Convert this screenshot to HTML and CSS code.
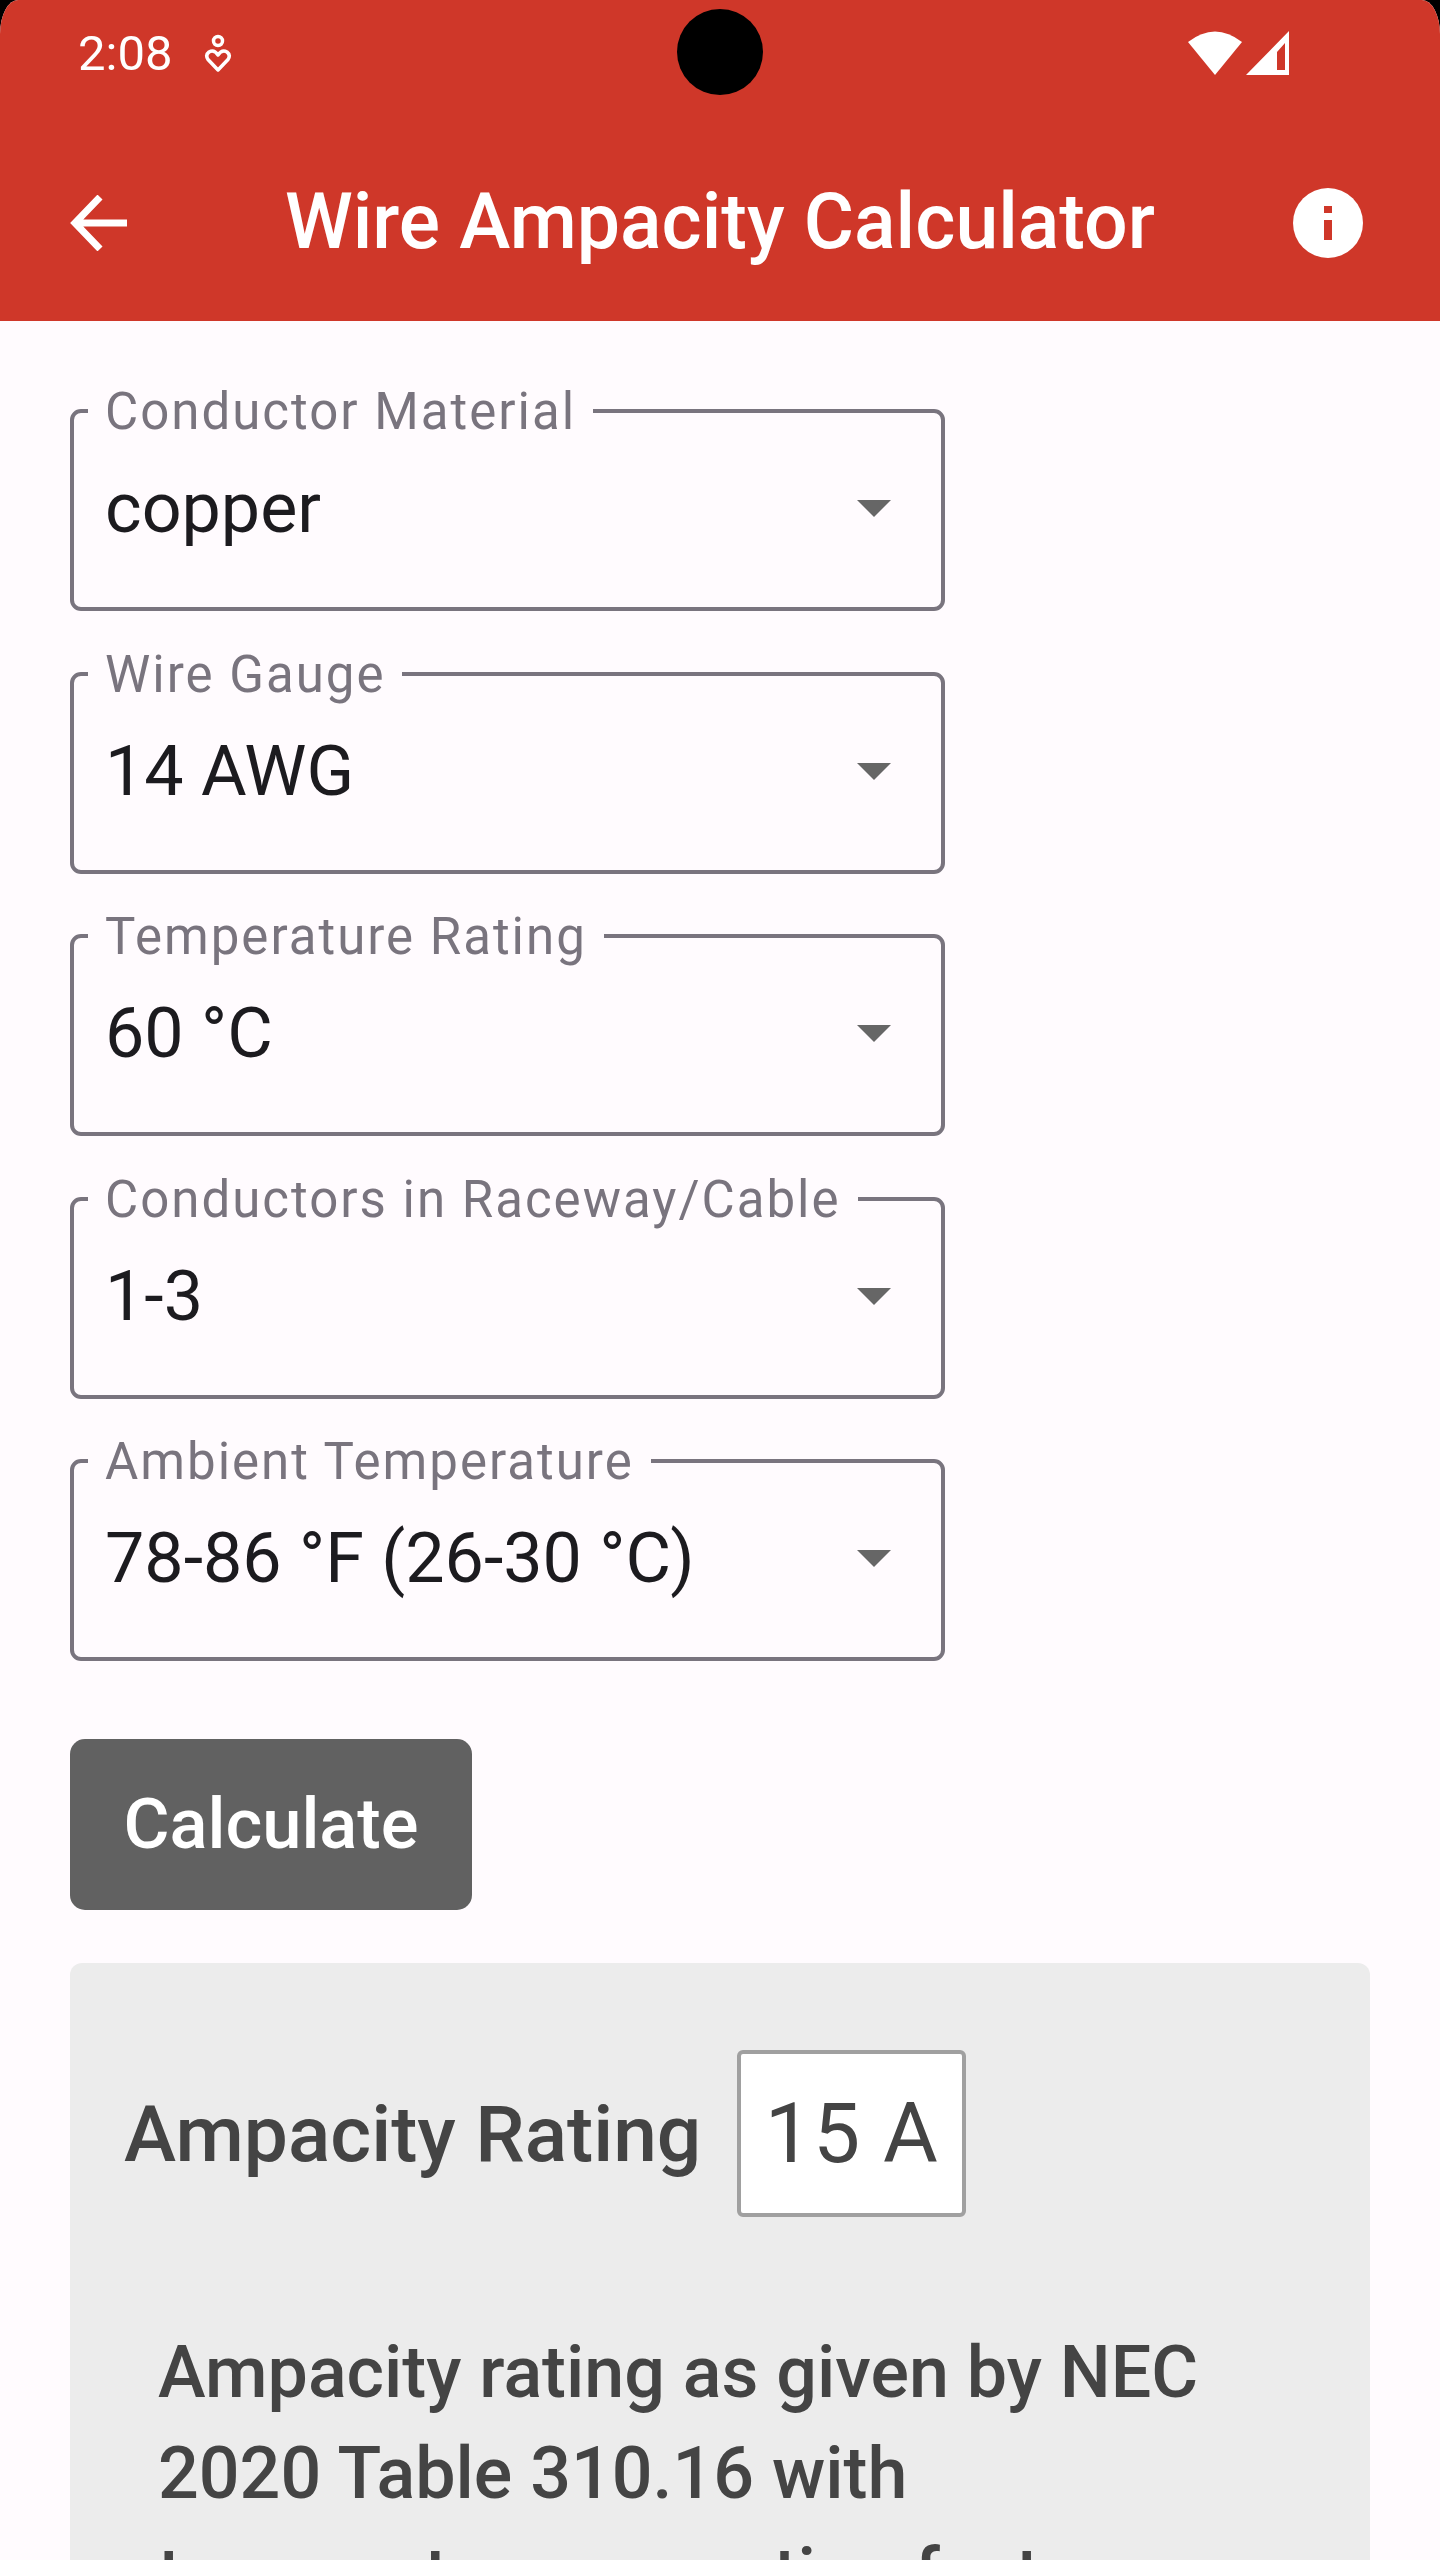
FILE: index.html
```html
<!DOCTYPE html>
<html>
<head>
<meta charset="UTF-8">
<meta name="viewport" content="width=device-width, initial-scale=1.0">
<title>Wire Ampacity Calculator</title>
<link rel="stylesheet" href="styles.css">
</head>

<body>
<div class="screen">
    <header class="appbar">
        <div class="status">
            <div class="status-left">
                <span class="clock">2:08</span>
                <svg class="status-icon" width="28" height="38" viewBox="0 0 28 38" fill="none" stroke="#fff" stroke-width="3.500" stroke-linejoin="round">
                    <circle cx="14" cy="7" r="4.500"/>
                    <path d="M14 36 L4 25.500 Q1 21 5 18 Q10 15 14 21 Q18 15 23 18 Q27 21 24 25.500 Z"/>
                </svg>
            </div>
            <div class="status-right">
                <svg width="54" height="44" viewBox="0 0 54 44" fill="#fff">
                    <path d="M27 44 L0 11 Q27 -10 54 11 Z"/>
                </svg>
                <svg width="43" height="44" viewBox="0 0 43 44" fill="#fff">
                    <path fill-rule="evenodd" d="M43 0 V44 H0 Z M39 12 L31 21 V39 H39 Z"/>
                </svg>
            </div>
        </div>
        <div class="toolbar">
            <svg class="back" width="57" height="56" viewBox="0 0 57 56" fill="none" stroke="#fff" stroke-width="7">
                <path d="M57 28 H5 M30 2 L5 28 L30 54"/>
            </svg>
            <h1 class="title">Wire Ampacity Calculator</h1>
            <svg class="info" width="70" height="70" viewBox="0 0 70 70">
                <circle cx="35" cy="35" r="35" fill="#fff"/>
                <rect x="31" y="18" width="8" height="7" fill="#cf3729"/>
                <rect x="31" y="32" width="8" height="20" fill="#cf3729"/>
            </svg>
        </div>
    </header>
    <div class="punch"></div>

    <main class="content">
        <div class="field">
            <span class="field-label">Conductor Material</span>
            <span class="field-value">copper</span>
            <span class="caret"></span>
        </div>
        <div class="field">
            <span class="field-label">Wire Gauge</span>
            <span class="field-value">14 AWG</span>
            <span class="caret"></span>
        </div>
        <div class="field">
            <span class="field-label">Temperature Rating</span>
            <span class="field-value">60 °C</span>
            <span class="caret"></span>
        </div>
        <div class="field">
            <span class="field-label">Conductors in Raceway/Cable</span>
            <span class="field-value">1-3</span>
            <span class="caret"></span>
        </div>
        <div class="field">
            <span class="field-label">Ambient Temperature</span>
            <span class="field-value">78-86 °F (26-30 °C)</span>
            <span class="caret"></span>
        </div>

        <button class="calc">Calculate</button>

        <section class="result">
            <div class="rating">
                <span class="rating-label">Ampacity Rating</span>
                <span class="rating-value">15 A</span>
            </div>
            <p class="note">Ampacity rating as given by NEC 2020 Table 310.16 with temperature correction factors</p>
        </section>
    </main>
</div>
</body>
</html>
```
FILE: styles.css
```css
html, body { margin: 0; padding: 0; background: #000; }
body { font-family: Roboto, sans-serif; }
.screen { position: relative; width: 1440px; height: 2560px; overflow: hidden; background: #fffbfe; border-radius: 18px 18px 0 0 / 34px 34px 0 0; }

.appbar { height: 321px; background: #cf3729; color: #fff; display: flex; flex-direction: column; }
.status { height: 106px; display: flex; justify-content: space-between; align-items: center; padding: 0 151px 0 78px; }
.status-left { display: flex; align-items: center; gap: 32px; }
.status-right { display: flex; align-items: center; gap: 4px; }
.clock { font-size: 49px; font-weight: 400; }
.toolbar { flex: 1; display: grid; grid-template-columns: 1fr auto 1fr; align-items: center; padding: 18px 77px 0; }
.back { margin-left: -7px; }
.info { justify-self: end; }
.title { margin: 0; font-size: 77px; font-weight: 500; line-height: 1; }
.punch { position: absolute; left: 677px; top: 9px; width: 86px; height: 86px; border-radius: 50%; background: #000; }

.content { padding: 88px 70px 0; }
.field { position: relative; box-sizing: border-box; width: 875px; height: 202px; margin-bottom: 60.500px; border: 4px solid #79747e; border-radius: 11px; }
.field-label { position: absolute; left: 14px; top: -29px; padding: 0 17px; background: #fffbfe; font-size: 51px; letter-spacing: 2px; line-height: 56px; color: #79747e; }
.field-value { position: absolute; left: 31px; top: 55px; font-size: 70px; line-height: 80px; color: #1c1b1f; white-space: nowrap; }
.caret { position: absolute; right: 50px; top: 87px; width: 0; height: 0; border-left: 17px solid transparent; border-right: 17px solid transparent; border-top: 17px solid #666; }

.calc { display: block; width: 402px; height: 171px; margin-top: 78px; padding: 0 0 2px; border: 0; border-radius: 15px; background: #616161; color: #fff; font-family: inherit; font-size: 70.500px; font-weight: 500; }

.result { width: 1300px; height: 700px; margin-top: 53px; box-sizing: border-box; padding: 87px 54px 0; border-radius: 12px; background: #ececec; color: #444; }
.rating { display: flex; align-items: center; gap: 36px; }
.rating-label { font-size: 78.500px; font-weight: 500; }
.rating-value { box-sizing: border-box; width: 229px; height: 167px; display: flex; align-items: center; justify-content: center; background: #fff; border: 4px solid #a0a0a0; border-radius: 6px; font-size: 84px; letter-spacing: 1px; }
.note { margin: 105px 0 0 34px; width: 1120px; font-size: 71.800px; font-weight: 500; line-height: 101px; }
```
